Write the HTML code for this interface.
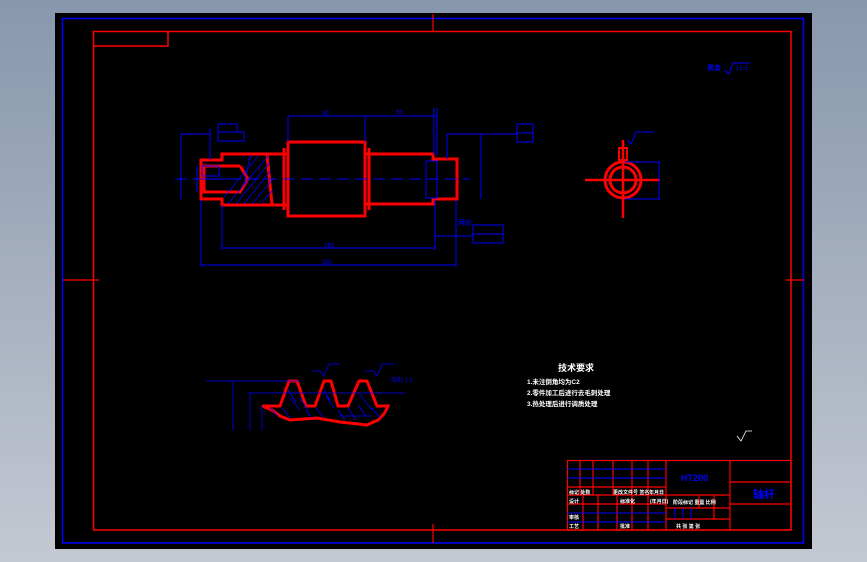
<!DOCTYPE html>
<html><head><meta charset="utf-8"><style>
html,body{margin:0;padding:0;width:867px;height:562px;overflow:hidden;background:linear-gradient(#8797ad,#c4c8d2);}
svg{position:absolute;left:0;top:0}
text{font-family:"Liberation Sans","Noto Sans CJK SC",sans-serif}
</style></head><body>
<svg width="867" height="562" viewBox="0 0 867 562">
<rect x="55" y="13" width="757" height="536" fill="#000"/>
<rect x="62.5" y="18.5" width="741" height="524.5" fill="none" stroke="#0000ff" stroke-width="1.5"/>
<rect x="93.5" y="31.5" width="697.5" height="498.5" fill="none" stroke="#ff0000" stroke-width="1.5"/>
<polyline points="93.5,46 168,46 168,31.5" fill="none" stroke="#f00" stroke-width="1.5"/>
<g stroke="#f00" stroke-width="1.2">
<line x1="433" y1="14" x2="433" y2="31"/><line x1="433" y1="524" x2="433" y2="543"/>
<line x1="63" y1="280" x2="99" y2="280"/><line x1="786" y1="280" x2="804" y2="280"/>
</g>
<g fill="none" stroke="#f00" stroke-width="3">
<rect x="288" y="142" width="77" height="74"/>
<polyline points="365,154 433,154 433,159 457,159 457,199 433,199 433,204 365,204"/>
<polyline points="288,154 222,154 222,160 201,160 201,199 222,199 222,205 288,205"/>
<polyline points="240,166 204,166 204,192 240,192 248,179 240,166"/>
<line x1="267" y1="155" x2="272" y2="204"/>
<line x1="284" y1="148" x2="284" y2="210"/><line x1="369" y1="148" x2="369" y2="210"/>
</g>
<g stroke="#0000ff" stroke-width="0.8">
<line x1="228" y1="204" x2="268" y2="156"/><line x1="236" y1="204" x2="270" y2="162"/><line x1="244" y1="204" x2="271" y2="170"/><line x1="252" y1="204" x2="272" y2="180"/><line x1="260" y1="204" x2="273" y2="190"/><line x1="224" y1="197" x2="258" y2="156"/><line x1="244" y1="185" x2="250" y2="156"/><line x1="248" y1="160" x2="252" y2="156"/>
</g>
<g fill="none" stroke="#00f" stroke-width="1">
<line x1="175" y1="179" x2="470" y2="179" stroke-dasharray="12 6"/>
<line x1="288" y1="116" x2="437" y2="116"/><line x1="288" y1="116" x2="288" y2="142"/><line x1="365" y1="116" x2="365" y2="142"/><line x1="434" y1="108" x2="434" y2="155"/><line x1="437" y1="108" x2="437" y2="155"/>
<line x1="222" y1="248" x2="435" y2="248"/><line x1="222" y1="205" x2="222" y2="250"/><line x1="435" y1="200" x2="435" y2="250"/>
<line x1="201" y1="265" x2="456" y2="265"/><line x1="201" y1="200" x2="201" y2="267"/><line x1="456" y1="200" x2="456" y2="267"/>
<line x1="181" y1="134" x2="181" y2="199"/><line x1="181" y1="134" x2="210" y2="134"/><line x1="210" y1="128" x2="210" y2="160"/>
<rect x="218" y="124" width="19" height="8"/><rect x="218" y="132" width="26" height="9"/>
<line x1="481" y1="134" x2="481" y2="199"/><line x1="447" y1="134" x2="481" y2="134"/><line x1="447" y1="134" x2="447" y2="159"/><line x1="481" y1="134" x2="517" y2="134"/>
<rect x="517" y="124" width="16" height="9"/><rect x="517" y="133" width="16" height="9"/>
<line x1="435" y1="236" x2="473" y2="236"/><rect x="473" y="225" width="30" height="9"/><rect x="473" y="234" width="30" height="9"/>
<rect x="426" y="161" width="11" height="37"/>
<line x1="195" y1="179" x2="230" y2="179"/><line x1="197" y1="166" x2="197" y2="192"/>
<rect x="202" y="166" width="17" height="10"/>
</g>
<g fill="#00f" font-size="6">
<text x="322" y="115">80</text><text x="396" y="114">55</text><text x="324" y="247">188</text><text x="322" y="264">200</text>
<text x="458" y="225" font-size="7">两处</text>
</g>
<g fill="none" stroke="#f00">
<circle cx="623" cy="180" r="18" stroke-width="3"/><circle cx="623" cy="180" r="13" stroke-width="3"/>
<line x1="585" y1="180" x2="660" y2="180" stroke-width="2.5"/><line x1="623" y1="140" x2="623" y2="218" stroke-width="2.5"/>
<rect x="619" y="148" width="8" height="12" stroke-width="2"/>
</g>
<g fill="none" stroke="#00f" stroke-width="1">
<line x1="625" y1="162" x2="660" y2="162"/><line x1="625" y1="199" x2="660" y2="199"/><line x1="659" y1="162" x2="659" y2="199"/>
<polyline points="627,140 631,144 636,132 654,132"/>
</g>
<text x="707" y="70" fill="#00f" font-size="7" font-weight="bold">其余</text>
<polyline points="725,70 729,74 733,63 750,63" fill="none" stroke="#00f"/>
<text x="736" y="70" fill="#00f" font-size="6">12.5</text>
<path d="M262,406 L280,406 L289,381 L297,381 L306,406 L315,406 L324,381 L331,381 L338,406 L348,406 L359,381 L367,381 L377,406 L388,406 L384,414 L378,420 L367,425 L340,422 L317,418 L290,420 L280,416 L272,410 Z" fill="none" stroke="#f00" stroke-width="3"/>
<g stroke="#00f" stroke-width="0.8" fill="none">
<line x1="206" y1="381" x2="300" y2="381"/><line x1="248" y1="393" x2="405" y2="393"/>
<line x1="233" y1="381" x2="233" y2="430"/><line x1="250" y1="393" x2="250" y2="430"/><line x1="262" y1="406" x2="262" y2="430"/>
<line x1="338" y1="416" x2="372" y2="416"/>
<polyline points="312,371 320,371 324,376 329,364 340,364"/><polyline points="365,371 373,371 377,376 382,364 394,364"/>
<line x1="290" y1="398" x2="300" y2="410"/><line x1="282" y1="408" x2="290" y2="418"/><line x1="300" y1="398" x2="308" y2="410"/><line x1="316" y1="408" x2="324" y2="418"/><line x1="326" y1="396" x2="334" y2="408"/><line x1="348" y1="408" x2="356" y2="420"/><line x1="360" y1="395" x2="372" y2="410"/><line x1="372" y1="408" x2="380" y2="418"/>
<line x1="288" y1="390" x2="296" y2="402"/><line x1="306" y1="410" x2="312" y2="418"/><line x1="324" y1="390" x2="330" y2="400"/><line x1="338" y1="410" x2="345" y2="420"/><line x1="358" y1="405" x2="366" y2="416"/><line x1="270" y1="408" x2="278" y2="416"/>
</g>
<g fill="#00f" font-size="6"><text x="391" y="382">齿形 1:1</text></g>
<g fill="#fff" font-weight="bold">
<text x="558" y="371" font-size="9">技术要求</text>
<text x="527" y="384" font-size="6.5">1.未注倒角均为C2</text>
<text x="527" y="395" font-size="6.5">2.零件加工后进行去毛刺处理</text>
<text x="527" y="406" font-size="6.5">3.热处理后进行调质处理</text>
</g>
<polyline points="737,436 741,441 746,431 752,431" fill="none" stroke="#fff" stroke-width="0.8"/>
<g fill="none" stroke="#f00" stroke-width="1.2">
<rect x="567.5" y="460.5" width="223.5" height="69.5"/>
<line x1="580" y1="460" x2="580" y2="495"/><line x1="593" y1="460" x2="593" y2="495"/><line x1="613" y1="460" x2="613" y2="495"/><line x1="632" y1="460" x2="632" y2="495"/><line x1="648" y1="460" x2="648" y2="495"/>
<line x1="666" y1="460" x2="666" y2="530"/><line x1="730" y1="460" x2="730" y2="530"/>
<line x1="567" y1="487" x2="666" y2="487"/><line x1="567" y1="495" x2="730" y2="495"/><line x1="567" y1="504" x2="666" y2="504"/>
<line x1="583" y1="495" x2="583" y2="530"/><line x1="598" y1="495" x2="598" y2="530"/><line x1="617" y1="495" x2="617" y2="530"/><line x1="632" y1="495" x2="632" y2="530"/><line x1="648" y1="495" x2="648" y2="530"/>
<line x1="666" y1="508" x2="730" y2="508"/><line x1="666" y1="519" x2="730" y2="519"/>
<line x1="699" y1="495" x2="699" y2="508"/><line x1="714" y1="495" x2="714" y2="519"/>
<line x1="730" y1="482" x2="791" y2="482"/><line x1="730" y1="504" x2="791" y2="504"/>
</g>
<g stroke="#00f" stroke-width="1">
<line x1="567" y1="469" x2="666" y2="469"/><line x1="567" y1="478" x2="666" y2="478"/>
<line x1="567" y1="513" x2="666" y2="513"/><line x1="567" y1="522" x2="666" y2="522"/>
<line x1="675" y1="508" x2="675" y2="519"/><line x1="683" y1="508" x2="683" y2="519"/><line x1="691" y1="508" x2="691" y2="519"/>
</g>
<text x="681" y="481" fill="#00f" font-size="9" font-weight="bold">HT200</text>
<text x="753" y="498" fill="#00f" font-size="11" font-weight="bold">轴杆</text>
<g fill="#fff" font-size="5" font-weight="bold">
<text x="569" y="494">标记 处数</text><text x="613" y="494">更改文件号 签名</text><text x="649" y="494">年月日</text>
<text x="569" y="503">设计</text><text x="620" y="503">标准化</text><text x="650" y="503">(年月日)</text>
<text x="673" y="504">阶段标记 重量 比例</text>
<text x="569" y="519">审核</text><text x="569" y="528">工艺</text><text x="620" y="528">批准</text>
<text x="676" y="528">共 张 第 张</text>
</g>
</svg>
</body></html>
